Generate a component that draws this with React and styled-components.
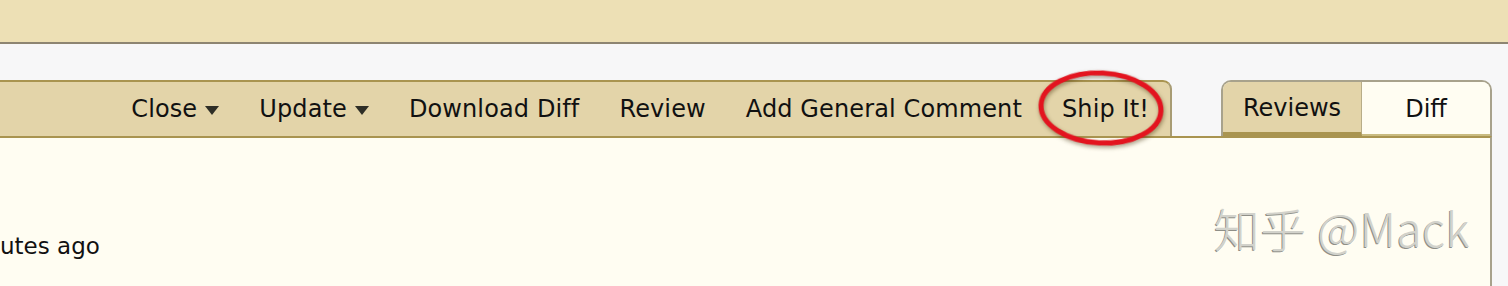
import React from 'react'
import styled, { createGlobalStyle } from 'styled-components'

const GlobalStyle = createGlobalStyle`
  html, body {
    margin: 0;
    padding: 0;
    background: #f7f7f8;
  }
  body {
    font-family: "DejaVu Sans", Verdana, sans-serif;
    color: #111;
    overflow: hidden;
  }
`

const Page = styled.div`
  width: 1508px;
  height: 286px;
  display: flex;
  flex-direction: column;
  background: #f7f7f8;
`

const TopBand = styled.div`
  height: 42px;
  background: #ede0b5;
  border-bottom: 2px solid #8d8572;
  flex: none;
`

const Main = styled.div`
  flex: 1;
  display: flex;
  flex-direction: column;
  padding-top: 36px;
`

const BarRow = styled.div`
  display: flex;
  align-items: stretch;
  height: 56px;
  flex: none;
`

const ActionBar = styled.div`
  flex: 1;
  margin-right: 49px;
  display: flex;
  justify-content: flex-end;
  align-items: center;
  background: #e3d4a9;
  border-top: 2px solid #a99450;
  border-right: 2px solid #a89c74;
  border-top-right-radius: 9px;
`

const Action = styled.div`
  position: relative;
  display: flex;
  align-items: center;
  gap: 8px;
  padding: 0 ${p => (p.$last ? '21px' : '20px')} 0 20px;
  font-size: 24px;
  letter-spacing: 0.12px;
  line-height: 28px;
  white-space: nowrap;
`

const Caret = styled.span`
  display: inline-block;
  width: 0;
  height: 0;
  border-left: 7px solid transparent;
  border-right: 7px solid transparent;
  border-top: 9px solid #2e2e26;
  margin-top: 2px;
`

const Circle = styled.svg`
  position: absolute;
  z-index: 2;
  left: -4px;
  top: -25px;
  width: 126px;
  height: 76px;
  overflow: visible;
  pointer-events: none;
  transform: rotate(3deg);
  filter: drop-shadow(1px 2px 2px rgba(60, 40, 0, 0.45));
`

const Tabs = styled.div`
  width: 267px;
  margin-right: 16px;
  display: flex;
  border: 2px solid #a8a28c;
  border-bottom: 0;
  border-radius: 10px 10px 0 0;
  overflow: hidden;
  background: #fffdf2;
`

const Tab = styled.div`
  width: ${p => (p.$w ? p.$w + 'px' : 'auto')};
  flex: ${p => (p.$w ? 'none' : '1')};
  display: flex;
  align-items: center;
  justify-content: center;
  font-size: 24px;
  line-height: 28px;
  padding-top: 2px;
  box-sizing: border-box;
  background: ${p => (p.$active ? '#e3d4a9' : '#fffdf2')};
  border-bottom: ${p => (p.$active ? '4px solid #a99450' : '2px solid #c9bb80')};
  border-right: ${p => (p.$active ? '1px solid #b8ad88' : '0')};
`

const Content = styled.div`
  position: relative;
  flex: 1;
  margin-right: 16px;
  background: #fffdf2;
  border-top: 2px solid #a99450;
  border-right: 2px solid #a8a28c;
  padding-top: 94px;
`

const Meta = styled.div`
  font-size: 23px;
  line-height: 28px;
`

const Watermark = styled.div`
  position: absolute;
  right: 20px;
  top: 56px;
  font-family: "Noto Sans CJK SC", "Noto Sans", sans-serif;
  font-size: 46px;
  font-weight: 300;
  color: #d2d2cb;
  text-shadow: -1px 1px 0 #8f8f88;
  white-space: nowrap;
  letter-spacing: 0.5px;
`

const actions = [
  { label: 'Close', menu: true },
  { label: 'Update', menu: true },
  { label: 'Download Diff' },
  { label: 'Review' },
  { label: 'Add General Comment' },
]

export default function App() {
  return (
    <Page>
      <GlobalStyle />
      <TopBand />
      <Main>
        <BarRow>
          <ActionBar>
            {actions.map(a => (
              <Action key={a.label}>
                {a.label}
                {a.menu && <Caret />}
              </Action>
            ))}
            <Action $last>
              Ship It!
              <Circle viewBox="0 0 126 76">
                <ellipse cx="63" cy="38" rx="60" ry="35" fill="none" stroke="#e3141f" strokeWidth="5" />
              </Circle>
            </Action>
          </ActionBar>
          <Tabs>
            <Tab $w={139} $active>Reviews</Tab>
            <Tab>Diff</Tab>
          </Tabs>
        </BarRow>
        <Content>
          <Meta>utes ago</Meta>
          <Watermark>知乎 @Mack</Watermark>
        </Content>
      </Main>
    </Page>
  )
}
